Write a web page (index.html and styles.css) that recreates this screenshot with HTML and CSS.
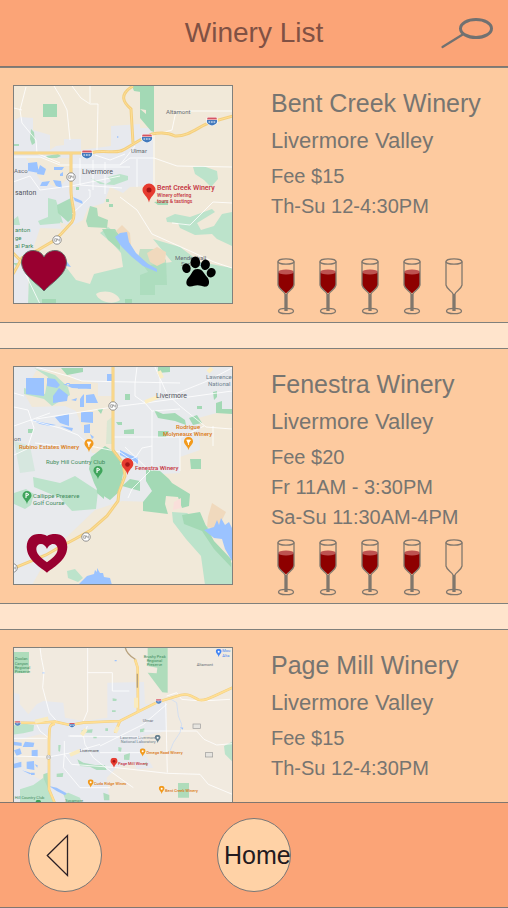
FILE: index.html
```html
<!DOCTYPE html>
<html lang="en">
<head>
<meta charset="utf-8">
<meta name="viewport" content="width=device-width, initial-scale=1">
<title>Winery List</title>
<link rel="stylesheet" href="styles.css">
</head>
<body>
<svg class="defs" aria-hidden="true">
  <symbol id="outline" viewBox="0 0 20 58">
    <path d="M2 4.500 V28 C3 33 8 34 9 37 V54 M18 4.500 V28 C17 33 12 34 11 37 V54 M10 37V54"/>
    <ellipse cx="10" cy="4.500" rx="8" ry="2.700"/>
    <ellipse cx="10" cy="54" rx="7.500" ry="2.700"/>
  </symbol>
  <symbol id="glass-full" viewBox="0 0 20 58">
    <path class="wine" d="M2 15H18V27C17 32 13 33 10 36.500C7 33 3 32 2 27Z"/>
    <ellipse class="wine-top" cx="10" cy="15" rx="8" ry="2.500"/>
    <use href="#outline" width="20" height="58"/>
  </symbol>
  <symbol id="pin" viewBox="0 0 14 20">
    <path d="M7 19C6 13 0.500 11 0.500 6.500A6.500 6.500 0 0 1 13.500 6.500C13.500 11 8 13 7 19Z"/>
  </symbol>
  <symbol id="shield" viewBox="0 0 12 9">
    <path fill="#fff" d="M1 0H11L12 4C12 7 9 8 6 9C3 8 0 7 0 4Z"/>
    <path fill="#4279bd" d="M1 3H11C12 6 9 8 6 8.500C3 8 0 6 1 3Z"/>
    <path fill="#d45562" d="M1.500 .5H10.500L11 2.500H1Z"/>
    <path stroke="#fff" stroke-width="1.200" stroke-dasharray="1.700 .8" d="M2.500 5H10"/>
  </symbol>
  <symbol id="route" viewBox="0 0 10 10">
    <circle cx="5" cy="5" r="4.200" fill="#fff" stroke="#777" stroke-width=".8"/>
    <path d="M2.700 3.700H4.500V6.300H2.700ZM5.500 3.500V5H7.300M7.300 3.500V6.500" fill="none" stroke="#777" stroke-width=".6"/>
  </symbol>
</svg>

<header class="bar top-bar">
  <h1 class="title">Winery List</h1>
  <button class="search" type="button" aria-label="Search">
    <svg viewBox="441 16 54 34" width="54" height="34"><path d="M442.500 47 463.500 34" stroke-width="2.200"/><ellipse cx="476" cy="28.500" rx="15.500" ry="9" stroke-width="3"/></svg>
  </button>
</header>

<main class="list">
  <article class="card">
    <div class="map">
      <svg class="map-art" viewBox="14 86 218 217" role="img" aria-label="Map of Bent Creek Winery">
        <rect x="13" y="85" width="220" height="220" fill="#f1e9d9"/>
        <g fill="#e7e9ee">
          <path d="M13 121 20 117 33 118V130L50 135V150L56 146 64 145V139H81V150L111 146V126L140 124V128H153V186L130 187 123 193 110 187 104 203 88 208 83 220 66 229 40 228 34 246 28 262 29 304H13Z"/>
        </g>
        <g fill="#bce3cb">
          <path d="M28 304 29 277 66 267 76 280 90 284 94 274 123 267 121 253 112 243 100 233 108 227 120 236 140 258 150 265 172 262 153 239 180 247 200 262 232 268V304Z"/>
          <path d="M166 218 175 214 190 217 212 209 215 212 197 223 201 230 214 226 222 214 232 212V246L217 239 212 234 195 235 180 228 178 223 167 222Z"/>
          <path d="M193 167 203 166 217 171 218 179 211 187 204 180 195 174Z"/>
          <path d="M38 221 48 217V198L56 200 63 223 40 225ZM13 220 18 216 20 225H13ZM90 178 106 184 111 181 108 177 120 174 128 176 128 180 114 185 100 184Z"/>
        </g>
        <g fill="#a3d9b5">
          <path d="M43 104H57V117H43Z"/>
          <path d="M140 86H154V132L151 131 140 118V109L146 114V110L140 109Z"/>
          <path d="M132 86H141V92L134 91Z"/>
          <path d="M57 205 71 198 75 216 68 222 58 213ZM86 221 90 206 97 208 98 216 108 220 107 228 88 227ZM13 144H19V146H13ZM31 129 34 132 35 143 32 145 30 139ZM46 156 58 154 61 156 50 161ZM13 263H18V268ZM102 229 115 229 120 236 120 250 108 240Z" opacity=".9"/>
          <path d="M140 249H155L166 260 167 285H155V295H140V275L148 272 138 258Z" opacity=".6"/>
          <path d="M154 202 168 200V205H158ZM109 204H113V207H109ZM76 187H79V190H76ZM106 199H109V202H106ZM42 299H56V304H42ZM125 299H132V304H125Z"/>
        </g>
        <path fill="#f1e9d9" d="M96 294C104 289 117 292 120 300C112 306 98 301 96 294ZM60 222 70 226 61 228ZM26 158 70 158 70 176 58 188 40 180Z"/>
        <path fill="#f0d9bd" d="M147 253 157 247 166 252 165 262 157 266 150 262ZM116 231 122 225 130 233 131 246 122 238Z"/>
        <g fill="#9bc3ff">
          <path d="M28 163 37 162 39 173 28 171ZM40 165 46 169 44 175 37 174ZM54 167 64 167 62 170 54 170ZM53 180 61 181 62 188 56 186ZM42 182 50 181 47 186 40 186ZM60 174 63 172V176H60ZM73 197 82 201 83 204 75 201ZM65 259 71 267 66 266ZM117 136 119 137 117 138Z"/>
          <path d="M115 237 120 233 127 232 129 242 136 253 148 264 157 269 157 272 143 266 132 257 121 246Z"/>
        </g>
        <g class="street">
          <path d="M26 87 20 110 22 123 36 140 37 153M54 86 60 96 67 110 70 140M72 86 81 98 90 104H98L97 150M90 86V103M120 197 137 210 152 234 190 251 214 262 232 268M120 165 130 158H154L177 166 232 167M154 133V186M137 159V187M157 134 172 130 176 111H232M13 157H40L60 165 120 165 135 146M36 153 60 163M80 158 80 185 122 188M95 155 110 160 125 154M13 182 30 176 40 190 71 186 120 176M72 214 90 197 90 190 88 190M172 223 190 225 213 202 232 203M22 110 14 108M27 258 26 275 40 304M93 160V190M105 162 105 194M71 167H130"/>
        </g>
        <g class="highway-edge"><path id="h1" d="M13 153H90C105 149 116 155 125 149L140 140 152 134C162 132 169 133 175 136C190 137 202 123 215 121L233 116M133 86C118 95 124 103 131 109L133 143M71 154V190C71 205 77 214 72 222L62 233 55 240 38 250 22 258 13 274M13 253 20 260"/></g>
        <use href="#h1" class="highway"/>
        <use href="#shield" x="81" y="150" width="12" height="9"/><use href="#shield" x="141" y="134" width="12" height="9"/><use href="#shield" x="206" y="117" width="12" height="9"/>
        <use href="#route" x="66" y="172" width="10" height="10"/><use href="#route" x="52" y="235" width="10" height="10"/>
        <g class="label">
          <text class="town" x="82" y="174">Livermore</text><text x="14" y="173">Asco</text><text class="town" x="15" y="195">santon</text>
          <text x="166" y="114">Altamont</text><text x="131" y="153">Ulmar</text><text x="175" y="260">Mendenhall</text><text x="181" y="266">Springs</text>
          <text class="park" x="15" y="232">anton</text><text class="park" x="15" y="240">ge</text><text class="park" x="15" y="248">al Park</text>
          <text class="place big" x="157" y="190">Bent Creek Winery</text><text class="place small" x="157" y="197">Winery offering</text><text class="place small" x="157" y="203">tours &amp; tastings</text>
        </g>
        <use href="#pin" class="pin-red" x="142" y="183" width="14" height="21"/><circle cx="149" cy="190" r="2.500" fill="#a51414"/>
      </svg>
      <button class="favorite" type="button" aria-label="Favorite" aria-pressed="true"><svg viewBox="20 250 48 44" width="48" height="44"><path class="heart" d="M44 292C38 285 22 276 21.500 264C21.500 256 27 251.500 33 251.500C38 251.500 42 254 44 258C46 254 50 251.500 55 251.500C61 251.500 66.500 256 66.500 264C66 276 50 285 44 292Z"/></svg></button>
      <svg class="paw" viewBox="180 255 37 34" width="37" height="34" role="img" aria-label="Dogs welcome"><ellipse cx="186.400" cy="268.300" rx="4.200" ry="4.800" transform="rotate(-20 186.400 268.300)"/><ellipse cx="195.300" cy="262.300" rx="4.800" ry="5.900"/><ellipse cx="205.400" cy="264.800" rx="4.500" ry="5.200" transform="rotate(12 205.400 264.800)"/><ellipse cx="211.200" cy="272.700" rx="4.300" ry="4.900" transform="rotate(35 211.200 272.700)"/><path d="M197.500 269C203 269 204 274 207 277C209 279 210 283 208 285.500C206 287.500 203 286.500 201 285.800Q197.500 284.800 194 285.800C192 286.500 189 287.500 187 285C185.500 282 187 279 189 277C192 274 192 269 197.500 269Z"/></svg>
    </div>
    <div class="info">
      <h2 class="name">Bent Creek Winery</h2>
      <p class="region">Livermore Valley</p>
      <p class="detail">Fee $15</p>
      <p class="detail">Th-Su 12-4:30PM</p>
      <div class="rating" role="img" aria-label="4 of 5 glasses">
        <svg class="glass"><use href="#glass-full"/></svg><svg class="glass"><use href="#glass-full"/></svg><svg class="glass"><use href="#glass-full"/></svg><svg class="glass"><use href="#glass-full"/></svg><svg class="glass"><use href="#outline"/></svg>
      </div>
    </div>
  </article>

  <article class="card">
    <div class="map">
      <svg class="map-art" viewBox="14 366 218 217" role="img" aria-label="Map of Fenestra Winery">
        <rect x="13" y="365" width="220" height="220" fill="#e8eaed"/>
        <path fill="#f1e9d9" d="M36 370 62 367 76 379 98 382V395H113V452H92L84 432 76 410 65 405 32 406 24 392ZM198 417 232 408V584H32L50 552 95 509 122 500 154 501 158 482 144 474 180 472 180 456 200 449Z"/>
        <g fill="#bce3cb">
          <path d="M34 367 55 374 68 386 70 394 52 405 44 398 24 393 24 387 45 393 48 376ZM33 476 60 482 75 475 98 490 96 508 72 510 60 497 34 486Z"/>
          <path d="M14 492 26 488 34 493 31 504 25 508 14 503ZM67 570 75 568 83 577 78 581 68 577ZM172 511 187 512 208 526 213 542 232 562V584H205L201 555 186 538 173 521Z"/>
          <path d="M14 440 30 445 35 470 20 472ZM107 420 112 416V443H106Z" opacity=".4"/>
        </g>
        <g fill="#a3d9b5">
          <path d="M91 456 105 445 118 453 124 467 120 490 110 499 99 492 94 482 89 468ZM96 475 104 476V498L97 492ZM146 469 160 470 169 478 172 482 190 493 189 505 182 507 178 496 166 495 165 503 168 513 143 510V501L152 490 146 480Z"/>
          <path d="M182 514 200 511 206 525 214 540 231 558V566L214 548 202 530 184 523Z"/>
          <path d="M61 367H83V371L67 374ZM158 366H170V371L158 372ZM154 409 163 413 175 412 185 419 186 424 175 420 158 417ZM189 417 197 414 202 422 193 424ZM216 402 222 400 222 408 232 408V413L216 412ZM213 391 217 390V396L214 399ZM190 458H201V468H191ZM124 429 134 428V433H124ZM158 430H169L166 436H158ZM125 393H130V399H125ZM122 485 130 478 140 480V490ZM97 408H103L101 413ZM116 421H122V424H118ZM197 405H202V408H197ZM28 428H33V432H28Z"/>
        </g>
        <path fill="#f0d9bd" d="M208 516 212 502 226 511 222 519 216 528 207 526Z"/><path fill="#f9dfda" d="M174 501 181 497 181 507 173 509Z"/>
        <g fill="#9bc3ff">
          <path d="M26 377H44V395L26 393ZM47 377 55 378 60 384 57 387 47 385ZM59 387 68 394 67 400 53 402 53 395ZM63 383H91V388L72 387ZM82 395 84 393V406H80V398ZM86 394 94 393 98 402 86 402ZM55 416 69 413V425L60 422ZM81 411H93V422L81 421ZM84 424 90 423V432H84ZM107 373H112V380H107ZM71 399 77 397 76 400ZM60 425 73 427 72 430ZM70 382H66L68 385ZM30 418 40 421 56 424 50 425 40 423ZM120 449 130 454 138 457V463L120 454ZM76 383 90 384V387L78 388ZM90 433 94 436 92 438Z"/>
          <path d="M78 584 87 575 94 573 95 569 97 571V567L100 572H103L104 576 110 577 112 584ZM204 529 214 526 217 519 219 524 221 517 225 524 229 521 232 527V560L225 548 222 538 214 537Z"/>
        </g>
        <g class="street">
          <path d="M36 418 113 406 145 402 232 390M14 406 28 409 34 427 27 448 14 454M36 366 68 375 82 380 180 382M137 366 135 382 135 395 145 402 152 410 152 470M155 366 167 393 180 405 206 426 232 428M145 400 175 393 205 381 232 367M14 425 28 420 50 412M30 419 60 427 78 434 90 445 120 451 136 462M113 436H182L204 425M125 446 150 470 132 488 128 497M152 410 180 408M180 437V470M35 442 60 445M14 392 24 395M120 463 136 456 142 447 152 445M213 445V425M160 371V394"/>
        </g>
        <g class="highway-edge"><path id="h2" d="M113 365V449L123 462 125 475 119 491 118 500 107 515 91 529 75 538 58 547 46 554 14 567"/></g>
        <use href="#h2" class="highway"/>
        <path d="M145 401 158 396M159 370 162 377M208 371 212 367" stroke="#fbeec4" stroke-width="4"/>
        <use href="#route" x="108" y="400" width="10" height="10"/><use href="#route" x="81" y="531" width="10" height="10"/><use href="#route" x="8" y="562" width="10" height="10"/>
        <g class="label">
          <text class="town" x="156" y="397">Livermore</text><text class="lab" x="206" y="378">Lawrence</text><text class="lab" x="208" y="385">National</text><text x="14" y="440">on</text>
          <text class="shop" x="19" y="448">Rubino Estates Winery</text><text class="park" x="46" y="463">Ruby Hill Country Club</text>
          <text class="shop" x="176" y="428">Rodrigue</text><text class="shop" x="163" y="435">Molyneaux Winery</text><text class="place" x="135" y="469">Fenestra Winery</text>
          <text class="park" x="33" y="497">Callippe Preserve</text><text class="park" x="33" y="504">Golf Course</text>
        </g>
        <use href="#pin" class="pin-red" x="121" y="457" width="13" height="18"/><circle cx="127.500" cy="463.500" r="2.300" fill="#a51414"/>
        <use href="#pin" class="pin-orange" x="84" y="438" width="10" height="14"/><use href="#pin" class="pin-orange" x="183" y="436" width="11" height="14"/>
        <path d="M87 441H91L89 444V446M186.500 439H190.500L188.500 442V444" fill="#fff" stroke="#fff" stroke-width=".8"/>
        <use href="#pin" class="pin-green" x="93" y="465" width="10" height="14"/><use href="#pin" class="pin-green" x="22" y="490" width="10" height="14"/>
        <path d="M97 472V467L100 468.500 97 470M26 497V492L29 493.500 26 495" fill="none" stroke="#fff"/>
      </svg>
      <button class="favorite" type="button" aria-label="Favorite" aria-pressed="false"><svg viewBox="20 530 48 44" width="48" height="44"><path fill="#990030" fill-rule="evenodd" d="M47 572.700C42 568 27 561 26.700 547C27 538 32 534 38.500 534C42 534 45 534.500 47 536C49 534.500 52 534 55.500 534C62 534 67 538 67.300 547C67 561 52 568 47 572.700ZM47 562.300C43 559 36.500 555 36.300 549C36.300 546 38 544 41 544C43.500 544 46 546 47 549C48 546.500 50.500 544 53 544C56 544 57.700 546 57.700 549C57.500 555 51 559 47 562.300Z"/></svg></button>
    </div>
    <div class="info">
      <h2 class="name">Fenestra Winery</h2>
      <p class="region">Livermore Valley</p>
      <p class="detail">Fee $20</p>
      <p class="detail">Fr 11AM - 3:30PM</p>
      <p class="detail">Sa-Su 11:30AM-4PM</p>
      <div class="rating" role="img" aria-label="4 of 5 glasses">
        <svg class="glass"><use href="#glass-full"/></svg><svg class="glass"><use href="#glass-full"/></svg><svg class="glass"><use href="#glass-full"/></svg><svg class="glass"><use href="#glass-full"/></svg><svg class="glass"><use href="#outline"/></svg>
      </div>
    </div>
  </article>

  <article class="card">
    <div class="map">
      <svg class="map-art" viewBox="42 81 654 651" role="img" aria-label="Map of Page Mill Winery">
        <rect x="40" y="78" width="660" height="660" fill="#f1eadf"/>
        <path fill="#e7e9ee" d="M40 215 58 220 60 250 85 280 110 250 130 240 190 245 195 290 250 300 322 290V185L432 183 435 250 500 245V330L430 345 435 400 460 440 410 445 400 425 350 440 320 470 330 545 40 545Z"/>
        <path fill="#f1eadf" d="M42 360 120 340 145 345 143 430 130 480 90 460 42 400Z"/>
        <g fill="#a3d9b5">
          <path d="M40 93H87V155L40 157ZM443 80H503V215L487 214 443 155 470 157 472 140 443 135ZM534 486H567V530H534ZM232 415 250 425 285 432 315 433 320 447 290 447 270 437 240 435ZM130 460 143 455 145 510 165 545H130ZM170 458 190 456 188 468 170 468ZM355 378 365 380 363 392 355 390ZM372 402 390 396 388 417 372 416ZM310 515 328 522V538H312ZM338 232 350 234 349 240 338 240ZM336 268 347 268 347 273 336 273ZM245 328 278 325 276 335 245 335ZM280 346H290V352H280ZM175 372 182 372 180 392 175 390ZM420 325 433 322V332L420 334ZM316 322H324V330H316ZM430 430 440 422 443 435Z" opacity=".85"/>
        </g>
        <path fill="#bce3cb" d="M40 313 75 308 102 312 100 330 70 337 40 341ZM60 505 100 492 130 470 150 515 165 545H60ZM672 375 697 362V422L675 400ZM190 520 205 515 240 530 245 545H200Z"/>
        <g fill="#9bc3ff">
          <path d="M42 362 65 365V375L42 373ZM68 378 75 362 103 365 100 378ZM42 388 60 382 65 398 50 405ZM95 388 113 386V408L95 405ZM42 428 64 422V438L42 442ZM80 422 102 420 103 447 80 443ZM66 448 95 457 90 460ZM104 430 113 433 112 440ZM93 455H104V462H93ZM147 495 170 500 200 517 195 523 170 510ZM540 318 550 320 548 326ZM128 153H133V158H128ZM344 117H350V121H344Z"/>
        </g>
        <g class="street wide-street">
          <path d="M120 80 124 110 132 150 128 200 148 275 170 300M263 80V270L250 300M263 155H337V210H388M497 245 502 455M430 330H590L612 355 650 372 697 368M300 375 430 310 500 250M42 405 145 408 215 395 300 370M193 360V400L215 430 350 440 502 457 600 460 625 490 697 520M250 342 255 370 280 410 330 450 400 500M210 345 430 348M42 352H140M300 395H440M262 315 250 345 205 345M500 225 530 215 545 235 605 240 690 235M430 350 400 350M110 310 120 330 145 350M193 400 190 440 240 500 330 500"/>
        </g>
        <path fill="none" stroke="#c5d9f8" stroke-width="2" d="M505 230 530 245 535 285 545 310 540 335 520 365 510 390"/>
        <g class="highway-edge wide-highway"><path id="h3" d="M40 305 110 306 165 302 210 312 250 305 360 300 415 272 475 242 530 226C560 213 575 225 595 236C615 242 635 228 697 200M414 275 413 140 405 115M165 308C145 310 149 325 147 360V505L165 548M360 300 345 335"/></g>
        <use href="#h3" class="highway" stroke-width="5"/>
        <path d="M376 80C380 100 395 108 406 115M412 158V200" fill="none" stroke="#b8a27e" stroke-width="4"/>
        <path d="M105 302 145 292M210 402 238 390M345 334 355 318M245 342 258 325M408 230V260" stroke="#f9ebc0" stroke-width="12"/>
        <use href="#shield" x="43" y="300" width="20" height="15"/><use href="#shield" x="206" y="305" width="20" height="15"/><use href="#shield" x="466" y="234" width="20" height="15"/>
        <use href="#route" x="138" y="401" width="15" height="15"/>
        <g fill="#e6e4df" stroke="#999" stroke-width="2"><rect x="579" y="309" width="22" height="13"/><rect x="616" y="395" width="22" height="13"/></g>
        <g class="label wide">
          <text x="239" y="392" class="dark">Livermore</text><text x="590" y="135">Altamont</text><text x="428" y="303">Ulmar</text>
          <text class="park" x="45" y="118">Doolan</text><text class="park" x="44" y="131">Canyon</text><text class="park" x="44" y="144">Regional</text><text class="park" x="44" y="156">Preserve</text>
          <text class="park" x="431" y="110">Brushy Peak</text><text class="park" x="440" y="123">Regional</text><text class="park" x="440" y="136">Preserve</text>
          <text class="lab" x="360" y="354">Lawrence Livermore</text><text class="lab" x="362" y="366">National Laboratory</text>
          <text class="blue" x="667" y="94">Mou</text><text class="blue" x="667" y="107">Alta</text>
          <text class="place" x="354" y="431">Page Mill Winery</text><text class="shop" x="439" y="399">Omega Road Winery</text><text class="shop" x="282" y="493">Cuda Ridge Wines</text><text class="shop" x="495" y="513">Bent Creek Winery</text>
          <text class="park" x="44" y="535">Hill Country Club</text><text class="park" x="196" y="542">Sycamore</text>
        </g>
        <use href="#pin" class="pin-red" x="330" y="410" width="24" height="32"/><circle cx="342" cy="421" r="4" fill="#a51414"/>
        <use href="#pin" class="pin-orange" x="418" y="382" width="20" height="26"/><use href="#pin" class="pin-orange" x="262" y="475" width="20" height="26"/><use href="#pin" class="pin-orange" x="475" y="494" width="20" height="26"/>
        <use href="#pin" x="463" y="341" width="20" height="26" fill="#66808f"/><use href="#pin" x="646" y="83" width="20" height="26" fill="#4285f4"/><use href="#pin" class="pin-green" x="105" y="536" width="20" height="26"/>
        <g fill="#fff"><circle cx="428" cy="391" r="3"/><circle cx="272" cy="484" r="3"/><circle cx="485" cy="503" r="3"/><circle cx="473" cy="350" r="3"/><circle cx="656" cy="92" r="3"/></g>
      </svg>
    </div>
    <div class="info">
      <h2 class="name">Page Mill Winery</h2>
      <p class="region">Livermore Valley</p>
      <p class="detail">Fee $15</p>
      <p class="detail">Th-Su 12-4:30PM</p>
    </div>
  </article>
</main>

<nav class="bar bottom-bar" aria-label="Main">
  <button class="round" type="button" aria-label="Back"><svg viewBox="46 836 24 45" width="24" height="45"><path d="M47.300 858.500 67.500 838.500V878.500Z"/></svg></button>
  <button class="round home" type="button">Home</button>
</nav>
</body>
</html>
```
FILE: styles.css
```css
* { box-sizing: border-box; }

body {
  margin: 0;
  height: 100vh;
  display: flex;
  flex-direction: column;
  background: #ffe4cc;
  color: #777571;
  font-family: "Liberation Sans", Arial, sans-serif;
}

h1, h2, p { margin: 0; font-weight: 400; }

button {
  padding: 0;
  border: 0;
  background: none;
  color: inherit;
  font: inherit;
  cursor: pointer;
}

svg { display: block; }

.defs { position: absolute; width: 0; height: 0; }

.bar {
  flex: none;
  display: grid;
  grid-template-columns: 1fr auto 1fr;
  align-items: center;
  background: #fba477;
}

.top-bar {
  padding: 16px 13px 16px;
  border-bottom: 1px solid #80766f;
}

.title {
  grid-column: 2;
  color: #805144;
  font-size: 28px;
  line-height: 34px;
}

.search { justify-self: end; }

.search svg {
  fill: none;
  stroke: #717171;
  stroke-linecap: round;
}

.list {
  flex: 1;
  min-height: 0;
  display: flex;
  flex-direction: column;
  gap: 25px;
  overflow-y: auto;
  scrollbar-width: none;
}

.card {
  flex: none;
  display: grid;
  grid-template-columns: 220px 1fr;
  gap: 38px;
  padding: 17px 13px 7px;
  min-height: 256px;
  border: solid #80807c;
  border-width: 1px 0;
  background: #fdca9f;
}

.map {
  position: relative;
  align-self: start;
  border: 1px solid #80807c;
}

.map-art { width: 100%; height: auto; }

.favorite { position: absolute; left: 6px; bottom: 10px; }

.heart { fill: #990030; stroke: #666; }

.paw { position: absolute; right: 15px; bottom: 14px; }

.info { display: flex; flex-direction: column; white-space: nowrap; }

.name { font-size: 25px; line-height: 36px; }

.region { font-size: 22px; line-height: 40px; }

.detail { font-size: 20px; line-height: 30px; }

.rating {
  display: flex;
  gap: 22px;
  margin-top: auto;
  padding-left: 5px;
}

.glass {
  width: 20px;
  height: 58px;
  fill: none;
  stroke: #80776d;
  stroke-width: 1.3;
}

.wine { fill: #8e0000; stroke: none; }

.wine-top { fill: #bd5351; stroke: none; }

.bottom-bar {
  padding: 15px 28px;
  border: solid #80766f;
  border-width: 1px 0;
}

.round {
  display: grid;
  align-items: center;
  width: 74px;
  height: 74px;
  border: 1px solid #777;
  border-radius: 50%;
  background: #ffd2a6;
}

.round svg {
  margin-left: 17px;
  fill: none;
  stroke: #2b2025;
  stroke-width: 1.3;
}

.home {
  padding-left: 6px;
  color: #231a20;
  font-size: 25px;
  text-align: left;
}

.street { fill: none; stroke: #fff; stroke-opacity: .8; }

.wide-street { stroke-width: 3; }

.highway-edge { fill: none; stroke: #f3cf80; stroke-width: 3; }

.highway { fill: none; stroke: #ffdf94; }

.wide-highway { stroke-width: 8; }

.label { font: 6px Roboto, sans-serif; fill: #666b73; }

.town { font-size: 7px; fill: #51555c; }

.dark { fill: #444950; }

.park { fill: #3e8b5b; }

.lab { fill: #70838f; }

.blue { fill: #4285f4; }

.shop { fill: #db7a16; font-weight: 500; }

.place { fill: #c4303c; font-weight: 500; }

.big { font-size: 7px; }

.small { font-size: 5px; }

.wide { font-size: 12px; }

.wide .dark { font-size: 13px; }

.pin-red { fill: #e63b30; }

.pin-orange { fill: #f29a1d; }

.pin-green { fill: #3fa45b; }
```
